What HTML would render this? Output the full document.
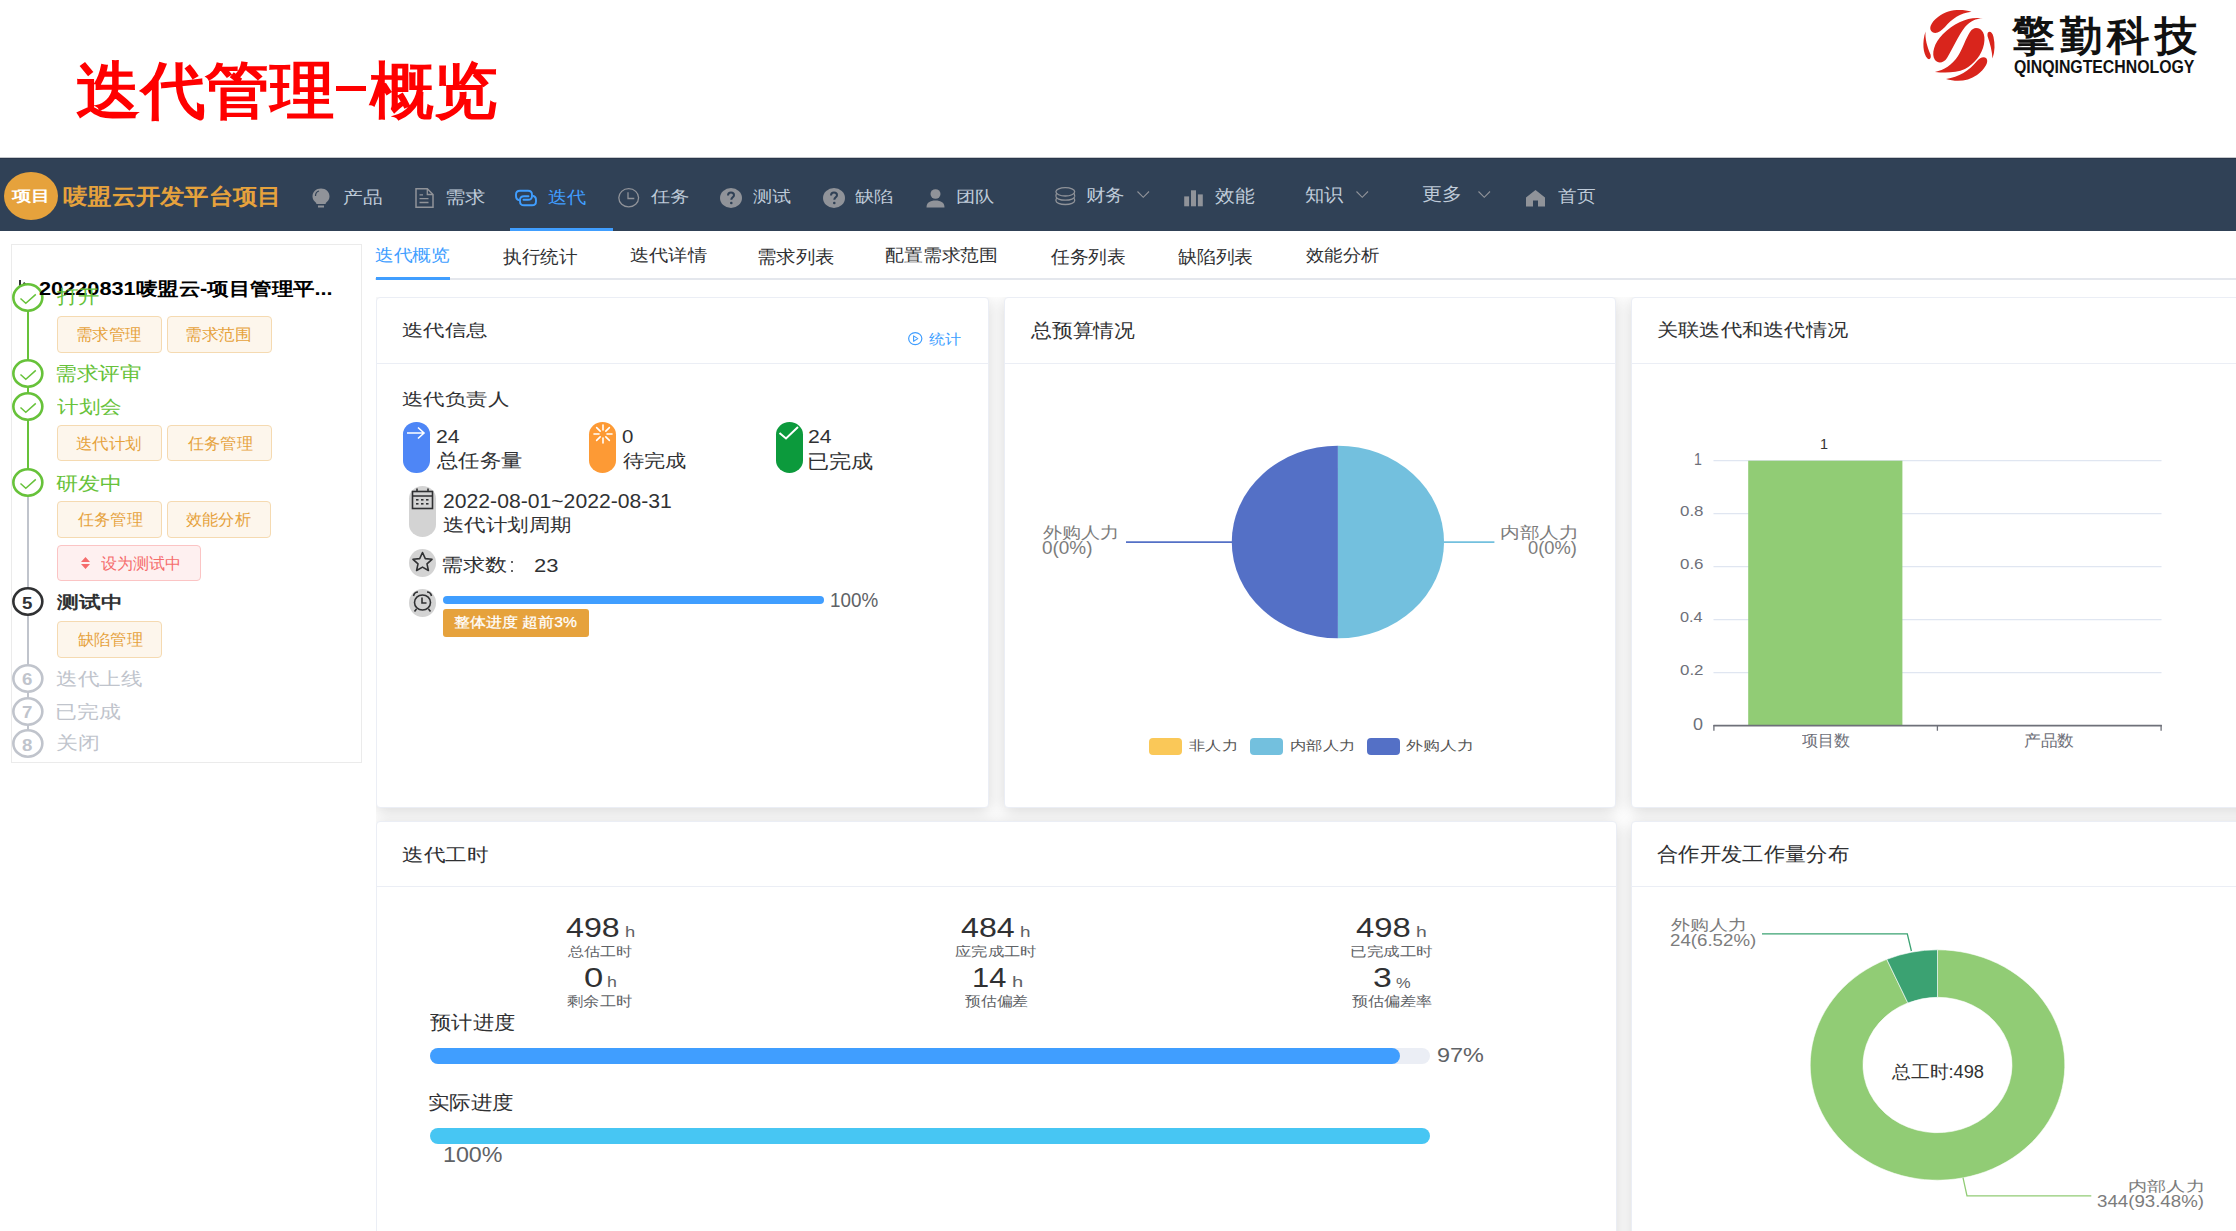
<!DOCTYPE html><html><head><meta charset="utf-8"><title>迭代管理-概览</title><style>
*{margin:0;padding:0;box-sizing:border-box}
html,body{width:2236px;height:1231px;overflow:hidden;background:#fff}
body{position:relative;font-family:"Liberation Sans",sans-serif}
.a{position:absolute;white-space:nowrap;line-height:1;transform-origin:0 0}
.r{position:absolute}
.card{position:absolute;background:#fff;border-radius:4px;box-shadow:0 3px 16px rgba(0,0,0,.16);border:1px solid #ebeef5}
svg{position:absolute;overflow:visible}

</style></head><body>
<div class="r" style="left:336px;top:86px;width:30px;height:4.5px;background:#ff0000"></div>
<svg style="left:1910px;top:0px" width="100" height="90" viewBox="0 0 100 90"><g fill="#d9251c">
<path d="M61.5 11.8C52 9 38 9 28 17C20 23 18 30 23 32.5C27 34 31 31 35 27C42 19 50 13 61.5 11.8Z"/>
<path d="M73 18.5C60 16 45 22 33 34C24 43 21 54 25 60C28 64 34 63 37 58C43 48 48 36 55 27C60 21 66 18.5 73 18.5Z"/>
<path d="M66 28C72 28 76 34 74 44C72 55 64 64 55 69C46 73 35 73 25 72C34 70 42 65 48 56C53 48 56 38 60 32C62 29 64 28 66 28Z"/>
<path d="M15.5 31.5C12 42 13 54 17.5 58.5C20 60.5 21.5 57.5 20.5 54.5C17 46 15 39 15.5 31.5Z"/>
<path d="M77.5 34C78 31 82 30.5 83.5 37C85 44 85 51 82.5 58.5C82 51 80 43 77.5 36Z"/>
<path d="M36 79C46 82 58 81.5 67 75C75 69 79 62 76.5 58.5C74 56 70 57.5 67 61C59 71 49 77 36 79Z"/>
</g></svg>
<div class="r" style="left:0;top:157px;width:2236px;height:1px;background:#c5c8cc"></div><div class="r" style="left:0;top:158px;width:2236px;height:72.6px;background:#304156;border-top:1.5px solid #29364a"></div>
<div class="r" style="left:4px;top:172px;width:54px;height:48px;border-radius:50%;background:#e6a23c"></div>
<div class="r" style="left:510px;top:228px;width:103px;height:3px;background:#409eff"></div>
<svg style="left:312px;top:188px" width="18" height="20" viewBox="0 0 18 20"><path d="M9 0.5C4 0.5 0.5 4 0.5 8.5C0.5 11.5 2.3 13.3 4 14.8L4.5 16H13.5L14 14.8C15.7 13.3 17.5 11.5 17.5 8.5C17.5 4 14 0.5 9 0.5Z" fill="#909399"/><path d="M3.5 8C3.5 5.5 5 3.6 7 3" stroke="#304156" stroke-width="1.2" fill="none"/><rect x="6" y="17.5" width="6" height="2" fill="#909399"/></svg>
<svg style="left:414.5px;top:188px" width="19" height="20" viewBox="0 0 19 20"><path d="M1 0.8H12.3L18 6.5V19.2H1Z" fill="none" stroke="#909399" stroke-width="1.5" stroke-linejoin="miter"/><path d="M12.3 0.8V6.5H18" fill="none" stroke="#909399" stroke-width="1.3"/><path d="M4.5 6.8H8M4.5 10.6H13.5M4.5 14.5H13.5" stroke="#909399" stroke-width="1.3"/></svg>
<svg style="left:514px;top:189px" width="24" height="18" viewBox="0 0 24 18"><g fill="none" stroke="#409eff" stroke-width="1.9" stroke-linecap="round"><path d="M4.5 11C2.8 10.5 2 9.2 2 7V5.5C2 3 3.5 1.7 6 1.7H14C16.5 1.7 18 3 18 5.5V7C18 9.5 16.5 10.8 14 10.8H9.5"/><path d="M19.5 7C21.2 7.5 22 8.8 22 11V12.5C22 15 20.5 16.3 18 16.3H10C7.5 16.3 6 15 6 12.5V11C6 8.5 7.5 7.2 10 7.2H14.5"/></g></svg>
<svg style="left:618px;top:188px" width="22" height="20" viewBox="0 0 22 20"><ellipse cx="10.7" cy="9.8" rx="9.9" ry="9.1" fill="none" stroke="#909399" stroke-width="1.3"/><path d="M10 4.2V10.5H16.3" fill="none" stroke="#909399" stroke-width="1.3"/></svg>
<svg style="left:720px;top:188px" width="22" height="20" viewBox="0 0 22 20"><ellipse cx="11" cy="10" rx="11" ry="10" fill="#909399"/><path d="M8 7.5C8 5.5 9.3 4.5 11 4.5C12.8 4.5 14 5.6 14 7.2C14 9.2 11.3 9.5 11.3 11.8" fill="none" stroke="#304156" stroke-width="2"/><circle cx="11.3" cy="15" r="1.3" fill="#304156"/></svg>
<svg style="left:822.5px;top:188px" width="22" height="20" viewBox="0 0 22 20"><ellipse cx="11" cy="10" rx="11" ry="10" fill="#909399"/><path d="M8 7.5C8 5.5 9.3 4.5 11 4.5C12.8 4.5 14 5.6 14 7.2C14 9.2 11.3 9.5 11.3 11.8" fill="none" stroke="#304156" stroke-width="2"/><circle cx="11.3" cy="15" r="1.3" fill="#304156"/></svg>
<svg style="left:926px;top:188.5px" width="19" height="19" viewBox="0 0 19 19"><ellipse cx="9.5" cy="5" rx="5" ry="4.8" fill="#909399"/><path d="M0.5 18.5C0.5 13.5 4 11.5 9.5 11.5C15 11.5 18.5 13.5 18.5 18.5Z" fill="#909399"/></svg>
<svg style="left:1054.5px;top:187px" width="21" height="19" viewBox="0 0 21 19"><g fill="none" stroke="#909399" stroke-width="1.3"><ellipse cx="10.3" cy="4.8" rx="9.4" ry="4.2"/><path d="M0.9 9.2C0.9 11.5 5 13.2 10.3 13.2C15.6 13.2 19.7 11.5 19.7 9.2"/><path d="M0.9 9.2C0.9 6.9 1.5 6.5 2 6.2M19.7 9.2C19.7 6.9 19.1 6.5 18.6 6.2"/><path d="M0.9 13.5C0.9 15.8 5 17.5 10.3 17.5C15.6 17.5 19.7 15.8 19.7 13.5C19.7 12 19 11.3 18.6 10.8M0.9 13.5C0.9 12 1.6 11.3 2 10.8"/></g></svg>
<svg style="left:1184px;top:189.6px" width="20" height="17" viewBox="0 0 20 17"><rect x="0.2" y="6.4" width="4.9" height="9.9" fill="#909399"/><rect x="7" y="0.3" width="5" height="16" fill="#909399"/><rect x="13.9" y="4.4" width="4.9" height="11.9" fill="#909399"/></svg>
<svg style="left:1525.6px;top:190px" width="19" height="16.5" viewBox="0 0 19 16.5"><path d="M9.5 0L19 7.5V16.5H12V10.5H7V16.5H0V7.5Z" fill="#909399"/></svg>
<svg style="left:1136.6px;top:191px" width="12.5" height="7" viewBox="0 0 12.5 7"><path d="M0.5 0.5L6.25 6.3L12 0.5" fill="none" stroke="#909399" stroke-width="1.1"/></svg>
<svg style="left:1356.4px;top:191px" width="12.5" height="7" viewBox="0 0 12.5 7"><path d="M0.5 0.5L6.25 6.3L12 0.5" fill="none" stroke="#909399" stroke-width="1.1"/></svg>
<svg style="left:1478.4px;top:191px" width="12.5" height="7" viewBox="0 0 12.5 7"><path d="M0.5 0.5L6.25 6.3L12 0.5" fill="none" stroke="#909399" stroke-width="1.1"/></svg>
<div class="r" style="left:375px;top:277.5px;width:1861px;height:2.5px;background:#e4e7ed"></div>
<div class="r" style="left:375.5px;top:277px;width:74.5px;height:3px;background:#409eff"></div>
<div class="r" style="left:10.5px;top:243.5px;width:351.5px;height:519px;border:1.5px solid #ebebeb;background:#fff"></div>
<div class="r" style="left:26.6px;top:310px;width:2.2px;height:50px;background:#67c23a"></div>
<div class="r" style="left:26.6px;top:386px;width:2.2px;height:8px;background:#67c23a"></div>
<div class="r" style="left:26.6px;top:419px;width:2.2px;height:51px;background:#67c23a"></div>
<div class="r" style="left:26.6px;top:496px;width:2.2px;height:92px;background:#c0c4cc"></div>
<div class="r" style="left:26.6px;top:615px;width:2.2px;height:51px;background:#c0c4cc"></div>
<div class="r" style="left:26.6px;top:690px;width:2.2px;height:9px;background:#c0c4cc"></div>
<div class="r" style="left:26.6px;top:723px;width:2.2px;height:8px;background:#c0c4cc"></div>
<div class="r" style="left:19px;top:280px;width:2px;height:6px;background:#303133"></div><div class="r" style="left:23px;top:283px;width:4px;height:2px;background:#303133;transform:rotate(40deg)"></div>
<svg style="left:11.5px;top:283.0px" width="31.7" height="29" viewBox="0 0 31.7 29"><ellipse cx="15.85" cy="14.5" rx="14.5" ry="13.2" fill="#fff" stroke="#67c23a" stroke-width="2.6"/><path d="M8.5 15.5L13.8 20.3L23.8 11.4" fill="none" stroke="#67c23a" stroke-width="1.5"/></svg>
<svg style="left:11.5px;top:359.0px" width="31.7" height="29" viewBox="0 0 31.7 29"><ellipse cx="15.85" cy="14.5" rx="14.5" ry="13.2" fill="#fff" stroke="#67c23a" stroke-width="2.6"/><path d="M8.5 15.5L13.8 20.3L23.8 11.4" fill="none" stroke="#67c23a" stroke-width="1.5"/></svg>
<svg style="left:11.5px;top:391.8px" width="31.7" height="29" viewBox="0 0 31.7 29"><ellipse cx="15.85" cy="14.5" rx="14.5" ry="13.2" fill="#fff" stroke="#67c23a" stroke-width="2.6"/><path d="M8.5 15.5L13.8 20.3L23.8 11.4" fill="none" stroke="#67c23a" stroke-width="1.5"/></svg>
<svg style="left:11.5px;top:468.3px" width="31.7" height="29" viewBox="0 0 31.7 29"><ellipse cx="15.85" cy="14.5" rx="14.5" ry="13.2" fill="#fff" stroke="#67c23a" stroke-width="2.6"/><path d="M8.5 15.5L13.8 20.3L23.8 11.4" fill="none" stroke="#67c23a" stroke-width="1.5"/></svg>
<svg style="left:11.5px;top:587.3px" width="31.7" height="29" viewBox="0 0 31.7 29"><ellipse cx="15.85" cy="14.5" rx="14.5" ry="13.2" fill="#fff" stroke="#303133" stroke-width="2.6"/></svg>
<svg style="left:11.5px;top:664.0px" width="31.7" height="29" viewBox="0 0 31.7 29"><ellipse cx="15.85" cy="14.5" rx="14.5" ry="13.2" fill="#fff" stroke="#c0c4cc" stroke-width="2.6"/></svg>
<svg style="left:11.5px;top:696.8px" width="31.7" height="29" viewBox="0 0 31.7 29"><ellipse cx="15.85" cy="14.5" rx="14.5" ry="13.2" fill="#fff" stroke="#c0c4cc" stroke-width="2.6"/></svg>
<svg style="left:11.5px;top:729.3px" width="31.7" height="29" viewBox="0 0 31.7 29"><ellipse cx="15.85" cy="14.5" rx="14.5" ry="13.2" fill="#fff" stroke="#c0c4cc" stroke-width="2.6"/></svg>
<div class="r" style="left:57px;top:316.2px;width:104.6px;height:37.10000000000002px;background:#fdf6ec;border:1.2px solid #f5dab1;border-radius:4px"></div>
<div class="r" style="left:166.5px;top:316.2px;width:105.0px;height:37.10000000000002px;background:#fdf6ec;border:1.2px solid #f5dab1;border-radius:4px"></div>
<div class="r" style="left:57px;top:424.5px;width:104.69999999999999px;height:36.89999999999998px;background:#fdf6ec;border:1.2px solid #f5dab1;border-radius:4px"></div>
<div class="r" style="left:166.6px;top:424.5px;width:105.1px;height:36.89999999999998px;background:#fdf6ec;border:1.2px solid #f5dab1;border-radius:4px"></div>
<div class="r" style="left:57px;top:500.6px;width:104.6px;height:37.0px;background:#fdf6ec;border:1.2px solid #f5dab1;border-radius:4px"></div>
<div class="r" style="left:166.7px;top:500.6px;width:104.80000000000001px;height:37.0px;background:#fdf6ec;border:1.2px solid #f5dab1;border-radius:4px"></div>
<div class="r" style="left:57px;top:620.7px;width:104.6px;height:37.19999999999993px;background:#fdf6ec;border:1.2px solid #f5dab1;border-radius:4px"></div>
<div class="r" style="left:57px;top:544.6px;width:143.7px;height:36.8px;background:#fef0f0;border:1.2px solid #fbc4c4;border-radius:4px"></div>
<svg style="left:80.8px;top:557px" width="9" height="12" viewBox="0 0 9 12"><path d="M4.5 0L9 5H0Z M0 7H9L4.5 12Z" fill="#f56c6c"/></svg>
<div class="r" style="left:376px;top:296.8px;width:1860px;height:934.2px;overflow:hidden"><div class="card" style="left:0px;top:0.0px;width:613.3px;height:511.2px"></div><div class="card" style="left:627.6px;top:0.0px;width:612.4px;height:511.2px"></div><div class="card" style="left:1255px;top:0.0px;width:629px;height:511.2px"></div><div class="card" style="left:0px;top:524.2px;width:1240.6px;height:439px"></div><div class="card" style="left:1255px;top:524.2px;width:629px;height:439px"></div></div>
<div class="r" style="left:377px;top:362.5px;width:611px;height:1.2px;background:#ebeef5"></div>
<div class="r" style="left:1005px;top:362.5px;width:610px;height:1.2px;background:#ebeef5"></div>
<div class="r" style="left:1632px;top:362.5px;width:604px;height:1.2px;background:#ebeef5"></div>
<div class="r" style="left:377px;top:885.5px;width:1238.5px;height:1.2px;background:#ebeef5"></div>
<div class="r" style="left:1632px;top:885.5px;width:604px;height:1.2px;background:#ebeef5"></div>
<svg style="left:907.5px;top:331.8px" width="15" height="14" viewBox="0 0 15 14"><ellipse cx="7.25" cy="6.6" rx="6.6" ry="6" fill="none" stroke="#409eff" stroke-width="1.2"/><path d="M5.6 3.9L9.8 6.6L5.6 9.3Z" fill="none" stroke="#409eff" stroke-width="1.1" stroke-linejoin="round"/></svg>
<div class="r" style="left:403px;top:421.6px;width:26.5px;height:51.69999999999999px;border-radius:13.25px/12.190000000000001px;background:#4e86f6"></div>
<svg style="left:405px;top:425px" width="22" height="18" viewBox="0 0 22 18"><path d="M2 8H19M13 2.5L19 8L13 13.5" fill="none" stroke="#fff" stroke-width="1.6"/></svg>
<div class="r" style="left:588.8px;top:421.6px;width:27.100000000000023px;height:51.69999999999999px;border-radius:13.550000000000011px/12.466000000000012px;background:#fd9a35"></div>
<svg style="left:590.5px;top:422px" width="24" height="24" viewBox="0 0 24 24"><g stroke="#fff" stroke-width="1.6" stroke-linecap="round"><line x1="16.00" y1="12.00" x2="21.00" y2="12.00"/><line x1="14.83" y1="14.83" x2="18.36" y2="18.36"/><line x1="12.00" y1="16.00" x2="12.00" y2="21.00"/><line x1="9.17" y1="14.83" x2="5.64" y2="18.36"/><line x1="8.00" y1="12.00" x2="3.00" y2="12.00"/><line x1="9.17" y1="9.17" x2="5.64" y2="5.64"/><line x1="12.00" y1="8.00" x2="12.00" y2="3.00"/><line x1="14.83" y1="9.17" x2="18.36" y2="5.64"/></g></svg>
<div class="r" style="left:775.8px;top:421.6px;width:27.0px;height:51.69999999999999px;border-radius:13.5px/12.42px;background:#0c9a3c"></div>
<svg style="left:777px;top:425px" width="24" height="18" viewBox="0 0 24 18"><path d="M2.5 8L9 13.5L21 2" fill="none" stroke="#fff" stroke-width="2"/></svg>
<div class="r" style="left:409px;top:486px;width:27px;height:51px;border-radius:13.5px/12.42px;background:#d3d3d3"></div>
<svg style="left:411px;top:488px" width="23" height="22" viewBox="0 0 23 22"><g fill="none" stroke="#303133" stroke-width="1.6"><rect x="1.5" y="3.5" width="20" height="17"/><path d="M1.5 8H21.5M6 0.5V4M17 0.5V4"/></g><g fill="#303133"><rect x="5" y="11" width="2.5" height="1.6"/><rect x="10" y="11" width="2.5" height="1.6"/><rect x="15" y="11" width="2.5" height="1.6"/><rect x="5" y="15" width="2.5" height="1.6"/><rect x="10" y="15" width="2.5" height="1.6"/><rect x="15" y="15" width="2.5" height="1.6"/></g></svg>
<div class="r" style="left:409px;top:549px;width:27px;height:28px;border-radius:50%;background:#d3d3d3"></div>
<svg style="left:411px;top:550.5px" width="23" height="22" viewBox="0 0 23 22"><path d="M11.5 1.5L14.3 7.6L21 8.3L16 12.8L17.4 19.5L11.5 16.1L5.6 19.5L7 12.8L2 8.3L8.7 7.6Z" fill="none" stroke="#303133" stroke-width="1.6" stroke-linejoin="round"/></svg>
<div class="r" style="left:510.8px;top:560.8px;width:2.6px;height:2.6px;background:#303133;border-radius:1px"></div><div class="r" style="left:510.8px;top:569.8px;width:2.6px;height:2.6px;background:#303133;border-radius:1px"></div>
<div class="r" style="left:409px;top:589px;width:27px;height:28px;border-radius:50%;background:#d3d3d3"></div>
<svg style="left:411px;top:590px" width="23" height="23" viewBox="0 0 23 23"><g fill="none" stroke="#303133" stroke-width="1.6"><ellipse cx="11.5" cy="12.5" rx="8" ry="7.5"/><path d="M11 7.5V13H15.5"/><path d="M2.5 6C3 3.5 5 2 7 2M20.5 6C20 3.5 18 2 16 2M5.5 19L3.5 21.5M17.5 19L19.5 21.5"/></g></svg>
<div class="r" style="left:443px;top:596px;width:381px;height:8px;border-radius:4px;background:#409eff"></div>
<div class="r" style="left:443px;top:609.2px;width:145.8px;height:27.8px;border-radius:3px;background:#e6a23c"></div>
<svg style="left:0;top:0" width="2236" height="1231" viewBox="0 0 2236 1231"><path d="M1337.9 445.7 A106.2 96.3 0 0 1 1337.9 638.3 Z" fill="#73c0de"/><path d="M1337.9 445.7 A106.2 96.3 0 0 0 1337.9 638.3 Z" fill="#5470c6"/><path d="M1232 542.1 H1126" stroke="#5470c6" stroke-width="1.7"/><path d="M1444 542.1 H1494.4" stroke="#73c0de" stroke-width="1.7"/></svg>
<div class="r" style="left:1148.6px;top:738px;width:33.6px;height:17px;border-radius:4px;background:#fac858"></div>
<div class="r" style="left:1249.8px;top:738px;width:33.6px;height:17px;border-radius:4px;background:#73c0de"></div>
<div class="r" style="left:1366.9px;top:738px;width:33.6px;height:17px;border-radius:4px;background:#5470c6"></div>
<svg style="left:0;top:0" width="2236" height="1231" viewBox="0 0 2236 1231"><path d="M1713.5 460.7 H2161.5" stroke="#e0e6f1" stroke-width="1.2"/><path d="M1713.5 513.7 H2161.5" stroke="#e0e6f1" stroke-width="1.2"/><path d="M1713.5 566.7 H2161.5" stroke="#e0e6f1" stroke-width="1.2"/><path d="M1713.5 619.7 H2161.5" stroke="#e0e6f1" stroke-width="1.2"/><path d="M1713.5 672.6 H2161.5" stroke="#e0e6f1" stroke-width="1.2"/><rect x="1748.2" y="460.7" width="154.2" height="264.8" fill="#91cc75"/><path d="M1713.5 725.7 H2161.8" stroke="#6e7079" stroke-width="1.8"/><path d="M1713.9 725 V730.8 M1937.4 725 V730.8 M2161.1 725 V730.8" stroke="#6e7079" stroke-width="1.3"/></svg>
<div class="r" style="left:429.8px;top:1047.5px;width:1000.7px;height:16.5px;border-radius:8.25px;background:#ebeef5"></div>
<div class="r" style="left:429.8px;top:1047.5px;width:970.4px;height:16.5px;border-radius:8.25px;background:#409eff"></div>
<div class="r" style="left:429.8px;top:1128px;width:1000.7px;height:16px;border-radius:8px;background:#47c6f3"></div>
<svg style="left:0;top:0" width="2236" height="1231" viewBox="0 0 2236 1231"><path d="M1937.5 949.8 A127.3 115.2 0 1 1 1886.78 959.34 L1907.82 1002.90 A74.5 67.7 0 1 0 1937.5 997.3 Z" fill="#91cc75" stroke="#fff" stroke-width="0.6"/><path d="M1886.78 959.34 A127.3 115.2 0 0 1 1937.5 949.8 L1937.5 997.3 A74.5 67.7 0 0 0 1907.82 1002.90 Z" fill="#3ba272" stroke="#fff" stroke-width="0.6"/><path d="M1762 933.8 H1907.3 L1911.4 951" fill="none" stroke="#3ba272" stroke-width="1.3"/><path d="M1963 1177.6 L1967 1195.8 H2091.3" fill="none" stroke="#91cc75" stroke-width="1.3"/></svg>
<div class="a" id="title1" style="left:75.58px;top:60.03px;font-size:62.00px;color:#ff0000;font-weight:700;transform:scaleX(1.0405);">迭代管理</div>
<div class="a" id="title2" style="left:369.50px;top:60.05px;font-size:62.00px;color:#ff0000;font-weight:700;transform:scaleX(1.0263);">概览</div>
<div class="a" id="logo1" style="left:2011.91px;top:16.26px;font-size:41.25px;color:#111;font-weight:700;transform:scaleX(1.0352);letter-spacing:5px">擎勤科技</div>
<div class="a" id="logo2" style="left:2013.59px;top:57.39px;font-size:19.00px;color:#111;font-weight:700;transform:scaleX(0.8336);">QINQINGTECHNOLOGY</div>
<div class="a" id="nav_logo" style="left:12.48px;top:189.35px;font-size:14.75px;color:#fff;font-weight:700;transform:scaleX(1.2754);">项目</div>
<div class="a" id="nav_proj" style="left:63.33px;top:186.07px;font-size:22.25px;color:#e6a23c;font-weight:700;transform:scaleX(1.1034);">唛盟云开发平台项目</div>
<div class="a" id="n1" style="left:342.88px;top:188.68px;font-size:16.50px;color:#bfcbd9;font-weight:400;transform:scaleX(1.1620);">产品</div>
<div class="a" id="n2" style="left:444.64px;top:188.68px;font-size:16.50px;color:#bfcbd9;font-weight:400;transform:scaleX(1.1996);">需求</div>
<div class="a" id="n4" style="left:651.46px;top:187.85px;font-size:16.25px;color:#bfcbd9;font-weight:400;transform:scaleX(1.2135);">任务</div>
<div class="a" id="n5" style="left:753.48px;top:187.85px;font-size:16.25px;color:#bfcbd9;font-weight:400;transform:scaleX(1.1967);">测试</div>
<div class="a" id="n6" style="left:855.13px;top:187.85px;font-size:16.25px;color:#bfcbd9;font-weight:400;transform:scaleX(1.1992);">缺陷</div>
<div class="a" id="n7" style="left:956.38px;top:187.85px;font-size:16.25px;color:#bfcbd9;font-weight:400;transform:scaleX(1.2078);">团队</div>
<div class="a" id="n8" style="left:1085.77px;top:188.33px;font-size:16.75px;color:#bfcbd9;font-weight:400;transform:scaleX(1.1450);">财务</div>
<div class="a" id="n9" style="left:1214.98px;top:187.89px;font-size:17.50px;color:#bfcbd9;font-weight:400;transform:scaleX(1.0974);">效能</div>
<div class="a" id="n10" style="left:1304.75px;top:186.31px;font-size:18.00px;color:#bfcbd9;font-weight:400;transform:scaleX(1.0704);">知识</div>
<div class="a" id="n11" style="left:1422.46px;top:186.33px;font-size:17.75px;color:#bfcbd9;font-weight:400;transform:scaleX(1.1150);">更多</div>
<div class="a" id="n12" style="left:1557.68px;top:188.12px;font-size:17.25px;color:#bfcbd9;font-weight:400;transform:scaleX(1.0982);">首页</div>
<div class="a" id="n3" style="left:547.78px;top:188.68px;font-size:16.50px;color:#409eff;font-weight:400;transform:scaleX(1.1313);">迭代</div>
<div class="a" id="tab1" style="left:374.89px;top:246.90px;font-size:17.25px;color:#409eff;font-weight:400;transform:scaleX(1.1027);">迭代概览</div>
<div class="a" id="tab2" style="left:503.43px;top:248.84px;font-size:17.50px;color:#303133;font-weight:400;transform:scaleX(1.0321);">执行统计</div>
<div class="a" id="tab3" style="left:629.87px;top:246.90px;font-size:17.25px;color:#303133;font-weight:400;transform:scaleX(1.1302);">迭代详情</div>
<div class="a" id="tab4" style="left:757.47px;top:248.84px;font-size:17.50px;color:#303133;font-weight:400;transform:scaleX(1.0758);">需求列表</div>
<div class="a" id="tab5" style="left:885.45px;top:246.90px;font-size:17.25px;color:#303133;font-weight:400;transform:scaleX(1.1084);">配置需求范围</div>
<div class="a" id="tab6" style="left:1050.69px;top:248.84px;font-size:17.50px;color:#303133;font-weight:400;transform:scaleX(1.0405);">任务列表</div>
<div class="a" id="tab7" style="left:1178.19px;top:248.84px;font-size:17.50px;color:#303133;font-weight:400;transform:scaleX(1.0422);">缺陷列表</div>
<div class="a" id="tab8" style="left:1305.98px;top:246.91px;font-size:17.25px;color:#303133;font-weight:400;transform:scaleX(1.0819);">效能分析</div>
<div class="a" id="sb_title" style="left:39.41px;top:279.50px;font-size:18.25px;color:#000;font-weight:700;transform:scaleX(1.1910);">20220831唛盟云-项目管理平...</div>
<div class="a" id="sb_n5" style="left:22.29px;top:595.80px;font-size:16.75px;color:#303133;font-weight:700;transform:scaleX(1.1146);">5</div>
<div class="a" id="sb_n6" style="left:22.24px;top:672.19px;font-size:16.75px;color:#c0c4cc;font-weight:700;transform:scaleX(1.1146);">6</div>
<div class="a" id="sb_n7" style="left:22.28px;top:705.17px;font-size:16.75px;color:#c0c4cc;font-weight:700;transform:scaleX(1.1146);">7</div>
<div class="a" id="sb_n8" style="left:22.24px;top:737.80px;font-size:16.75px;color:#c0c4cc;font-weight:700;transform:scaleX(1.1146);">8</div>
<div class="a" id="sb_s1" style="left:57.44px;top:287.24px;font-size:19.00px;color:#67c23a;font-weight:400;transform:scaleX(1.1275);">打开</div>
<div class="a" id="sb_s2" style="left:55.43px;top:365.44px;font-size:18.50px;color:#67c23a;font-weight:400;transform:scaleX(1.1375);">需求评审</div>
<div class="a" id="sb_s3" style="left:57.45px;top:397.65px;font-size:18.25px;color:#67c23a;font-weight:400;transform:scaleX(1.1981);">计划会</div>
<div class="a" id="sb_s4" style="left:56.40px;top:474.24px;font-size:19.00px;color:#67c23a;font-weight:400;transform:scaleX(1.1660);">研发中</div>
<div class="a" id="sb_s5" style="left:57.49px;top:593.64px;font-size:17.00px;color:#303133;font-weight:700;transform:scaleX(1.2820);">测试中</div>
<div class="a" id="sb_s6" style="left:56.42px;top:671.28px;font-size:17.75px;color:#c0c4cc;font-weight:400;transform:scaleX(1.1979);">迭代上线</div>
<div class="a" id="sb_s7" style="left:55.30px;top:702.78px;font-size:18.00px;color:#c0c4cc;font-weight:400;transform:scaleX(1.2158);">已完成</div>
<div class="a" id="sb_s8" style="left:56.41px;top:735.48px;font-size:17.75px;color:#c0c4cc;font-weight:400;transform:scaleX(1.2151);">关闭</div>
<div class="a" id="tg1" style="left:76.03px;top:327.22px;font-size:15.50px;color:#e6a23c;font-weight:400;transform:scaleX(1.0267);">需求管理</div>
<div class="a" id="tg2" style="left:185.31px;top:327.22px;font-size:15.50px;color:#e6a23c;font-weight:400;transform:scaleX(1.0422);">需求范围</div>
<div class="a" id="tg3" style="left:76.40px;top:436.03px;font-size:15.50px;color:#e6a23c;font-weight:400;transform:scaleX(1.0272);">迭代计划</div>
<div class="a" id="tg4" style="left:187.59px;top:436.03px;font-size:15.50px;color:#e6a23c;font-weight:400;transform:scaleX(1.0116);">任务管理</div>
<div class="a" id="tg5" style="left:77.95px;top:512.39px;font-size:15.50px;color:#e6a23c;font-weight:400;transform:scaleX(1.0116);">任务管理</div>
<div class="a" id="tg6" style="left:186.18px;top:512.39px;font-size:15.50px;color:#e6a23c;font-weight:400;transform:scaleX(1.0121);">效能分析</div>
<div class="a" id="tg7" style="left:77.95px;top:632.16px;font-size:15.50px;color:#e6a23c;font-weight:400;transform:scaleX(1.0116);">缺陷管理</div>
<div class="a" id="tg8" style="left:100.71px;top:556.33px;font-size:15.75px;color:#f56c6c;font-weight:400;transform:scaleX(1.0060);">设为测试中</div>
<div class="a" id="c1_t" style="left:402.40px;top:321.71px;font-size:17.25px;color:#303133;font-weight:400;transform:scaleX(1.2595);">迭代信息</div>
<div class="a" id="c2_t" style="left:1031.42px;top:321.94px;font-size:18.75px;color:#303133;font-weight:400;transform:scaleX(1.0963);">总预算情况</div>
<div class="a" id="c3_t" style="left:1656.53px;top:321.90px;font-size:17.75px;color:#303133;font-weight:400;transform:scaleX(1.1795);">关联迭代和迭代情况</div>
<div class="a" id="c4_t" style="left:402.41px;top:846.28px;font-size:18.00px;color:#303133;font-weight:400;transform:scaleX(1.2002);">迭代工时</div>
<div class="a" id="c5_t" style="left:1656.84px;top:843.67px;font-size:20.00px;color:#303133;font-weight:400;transform:scaleX(1.0665);">合作开发工作量分布</div>
<div class="a" id="c1_stat" style="left:928.56px;top:332.39px;font-size:14.25px;color:#409eff;font-weight:400;transform:scaleX(1.1463);">统计</div>
<div class="a" id="c1_owner" style="left:402.40px;top:390.58px;font-size:17.25px;color:#303133;font-weight:400;transform:scaleX(1.2627);">迭代负责人</div>
<div class="a" id="c1_n1" style="left:435.71px;top:427.47px;font-size:19.25px;color:#303133;font-weight:400;transform:scaleX(1.1008);">24</div>
<div class="a" id="c1_l1" style="left:436.72px;top:450.96px;font-size:19.00px;color:#303133;font-weight:400;transform:scaleX(1.1207);">总任务量</div>
<div class="a" id="c1_n2" style="left:622.44px;top:427.47px;font-size:19.25px;color:#303133;font-weight:400;transform:scaleX(1.0625);">0</div>
<div class="a" id="c1_l2" style="left:623.44px;top:451.95px;font-size:18.00px;color:#303133;font-weight:400;transform:scaleX(1.1771);">待完成</div>
<div class="a" id="c1_n3" style="left:808.00px;top:427.47px;font-size:19.25px;color:#303133;font-weight:400;transform:scaleX(1.1008);">24</div>
<div class="a" id="c1_l3" style="left:806.91px;top:451.94px;font-size:19.00px;color:#303133;font-weight:400;transform:scaleX(1.1667);">已完成</div>
<div class="a" id="c1_date" style="left:442.83px;top:491.29px;font-size:20.50px;color:#303133;font-weight:400;transform:scaleX(1.0324);">2022-08-01~2022-08-31</div>
<div class="a" id="c1_cycle" style="left:442.81px;top:516.18px;font-size:18.00px;color:#303133;font-weight:400;transform:scaleX(1.1933);">迭代计划周期</div>
<div class="a" id="c1_req" style="left:441.29px;top:556.23px;font-size:18.00px;color:#303133;font-weight:400;transform:scaleX(1.2246);">需求数</div>
<div class="a" id="c1_req_n" style="left:533.59px;top:557.38px;font-size:18.25px;color:#303133;font-weight:400;transform:scaleX(1.2030);">23</div>
<div class="a" id="c1_pct" style="left:830.24px;top:591.22px;font-size:19.50px;color:#606266;font-weight:400;transform:scaleX(0.9656);">100%</div>
<div class="a" id="c1_tag" style="left:454.11px;top:615.82px;font-size:13.75px;color:#fff;font-weight:400;transform:scaleX(1.1405);-webkit-text-stroke:0.25px">整体进度 超前3%</div>
<div class="a" id="p_l1" style="left:1043.49px;top:523.66px;font-size:16.25px;color:#7c7c7c;font-weight:400;transform:scaleX(1.1902);">外购人力</div>
<div class="a" id="p_l1b" style="left:1042.48px;top:539.02px;font-size:18.25px;color:#7c7c7c;font-weight:400;transform:scaleX(1.0374);">0(0%)</div>
<div class="a" id="p_r1" style="left:1499.68px;top:523.66px;font-size:16.25px;color:#7c7c7c;font-weight:400;transform:scaleX(1.2303);">内部人力</div>
<div class="a" id="p_r1b" style="left:1527.63px;top:539.02px;font-size:18.25px;color:#7c7c7c;font-weight:400;transform:scaleX(1.0030);">0(0%)</div>
<div class="a" id="lg1" style="left:1189.06px;top:739.48px;font-size:13.00px;color:#555;font-weight:400;transform:scaleX(1.2528);">非人力</div>
<div class="a" id="lg2" style="left:1290.06px;top:739.48px;font-size:13.00px;color:#555;font-weight:400;transform:scaleX(1.2557);">内部人力</div>
<div class="a" id="lg3" style="left:1406.47px;top:739.48px;font-size:13.00px;color:#555;font-weight:400;transform:scaleX(1.2997);">外购人力</div>
<div class="a" id="ax0.8" style="left:1679.94px;top:504.28px;font-size:14.75px;color:#6e7079;font-weight:400;transform:scaleX(1.1465);">0.8</div>
<div class="a" id="ax0.6" style="left:1679.94px;top:557.28px;font-size:14.75px;color:#6e7079;font-weight:400;transform:scaleX(1.1465);">0.6</div>
<div class="a" id="ax0.4" style="left:1679.98px;top:609.52px;font-size:14.75px;color:#6e7079;font-weight:400;transform:scaleX(1.1040);">0.4</div>
<div class="a" id="ax0.2" style="left:1679.94px;top:662.73px;font-size:14.75px;color:#6e7079;font-weight:400;transform:scaleX(1.1465);">0.2</div>
<div class="a" id="ax1" style="left:1693.87px;top:451.15px;font-size:16.25px;color:#6e7079;font-weight:400;transform:scaleX(0.8676);">1</div>
<div class="a" id="ax0" style="left:1692.90px;top:716.03px;font-size:16.50px;color:#6e7079;font-weight:400;transform:scaleX(1.0876);">0</div>
<div class="a" id="bar_v" style="left:1820.31px;top:436.45px;font-size:15.25px;color:#333;font-weight:400;transform:scaleX(0.9458);">1</div>
<div class="a" id="bar_x1" style="left:1801.80px;top:731.95px;font-size:16.25px;color:#6e7079;font-weight:400;transform:scaleX(1.0041);">项目数</div>
<div class="a" id="bar_x2" style="left:2023.94px;top:731.95px;font-size:16.25px;color:#6e7079;font-weight:400;transform:scaleX(1.0450);">产品数</div>
<div class="a" id="w1n" style="left:566.39px;top:915.14px;font-size:26.75px;color:#303133;font-weight:400;transform:scaleX(1.2023);">498</div>
<div class="a" id="w1u" style="left:624.66px;top:925.14px;font-size:14.75px;color:#606266;font-weight:400;transform:scaleX(1.2439);">h</div>
<div class="a" id="w1l" style="left:568.18px;top:946.41px;font-size:12.50px;color:#606266;font-weight:400;transform:scaleX(1.2395);">总估工时</div>
<div class="a" id="w2n" style="left:584.20px;top:965.14px;font-size:26.75px;color:#303133;font-weight:400;transform:scaleX(1.2929);">0</div>
<div class="a" id="w2u" style="left:607.07px;top:975.14px;font-size:14.75px;color:#606266;font-weight:400;transform:scaleX(1.2059);">h</div>
<div class="a" id="w2l" style="left:567.13px;top:995.05px;font-size:13.75px;color:#606266;font-weight:400;transform:scaleX(1.1662);">剩余工时</div>
<div class="a" id="w3n" style="left:961.12px;top:915.14px;font-size:26.75px;color:#303133;font-weight:400;transform:scaleX(1.2026);">484</div>
<div class="a" id="w3u" style="left:1020.02px;top:925.14px;font-size:14.75px;color:#606266;font-weight:400;transform:scaleX(1.2788);">h</div>
<div class="a" id="w3l" style="left:955.30px;top:945.11px;font-size:13.00px;color:#606266;font-weight:400;transform:scaleX(1.2569);">应完成工时</div>
<div class="a" id="w4n" style="left:971.53px;top:965.14px;font-size:26.75px;color:#303133;font-weight:400;transform:scaleX(1.1511);">14</div>
<div class="a" id="w4u" style="left:1011.72px;top:975.14px;font-size:14.75px;color:#606266;font-weight:400;transform:scaleX(1.3662);">h</div>
<div class="a" id="w4l" style="left:964.99px;top:995.05px;font-size:13.75px;color:#606266;font-weight:400;transform:scaleX(1.1291);">预估偏差</div>
<div class="a" id="w5n" style="left:1356.11px;top:915.14px;font-size:26.75px;color:#303133;font-weight:400;transform:scaleX(1.2257);">498</div>
<div class="a" id="w5u" style="left:1415.96px;top:925.14px;font-size:14.75px;color:#606266;font-weight:400;transform:scaleX(1.3101);">h</div>
<div class="a" id="w5l" style="left:1350.19px;top:945.11px;font-size:13.00px;color:#606266;font-weight:400;transform:scaleX(1.2737);">已完成工时</div>
<div class="a" id="w6n" style="left:1372.54px;top:965.14px;font-size:26.75px;color:#303133;font-weight:400;transform:scaleX(1.2635);">3</div>
<div class="a" id="w6u" style="left:1395.63px;top:977.41px;font-size:13.75px;color:#606266;font-weight:400;transform:scaleX(1.1932);">%</div>
<div class="a" id="w6l" style="left:1352.38px;top:995.05px;font-size:13.75px;color:#606266;font-weight:400;transform:scaleX(1.1493);">预估偏差率</div>
<div class="a" id="w_p1" style="left:429.65px;top:1013.78px;font-size:18.50px;color:#303133;font-weight:400;transform:scaleX(1.1186);">预计进度</div>
<div class="a" id="w_p2" style="left:427.59px;top:1092.98px;font-size:19.25px;color:#303133;font-weight:400;transform:scaleX(1.1310);">实际进度</div>
<div class="a" id="w_97" style="left:1437.36px;top:1043.60px;font-size:21.00px;color:#606266;font-weight:400;transform:scaleX(1.1156);">97%</div>
<div class="a" id="w_100" style="left:442.77px;top:1144.00px;font-size:22.50px;color:#606266;font-weight:400;transform:scaleX(1.0331);">100%</div>
<div class="a" id="d_l1" style="left:1670.95px;top:917.71px;font-size:14.50px;color:#7c7c7c;font-weight:400;transform:scaleX(1.2667);">外购人力</div>
<div class="a" id="d_l1b" style="left:1670.31px;top:932.77px;font-size:16.75px;color:#7c7c7c;font-weight:400;transform:scaleX(1.1156);">24(6.52%)</div>
<div class="a" id="d_r1" style="left:2127.79px;top:1179.01px;font-size:14.25px;color:#7c7c7c;font-weight:400;transform:scaleX(1.3698);">内部人力</div>
<div class="a" id="d_r1b" style="left:2097.49px;top:1192.80px;font-size:16.50px;color:#7c7c7c;font-weight:400;transform:scaleX(1.1322);">344(93.48%)</div>
<div class="a" id="d_c" style="left:1891.57px;top:1064.47px;font-size:17.50px;color:#333;font-weight:400;transform:scaleX(1.0442);">总工时:498</div>
</body></html>
